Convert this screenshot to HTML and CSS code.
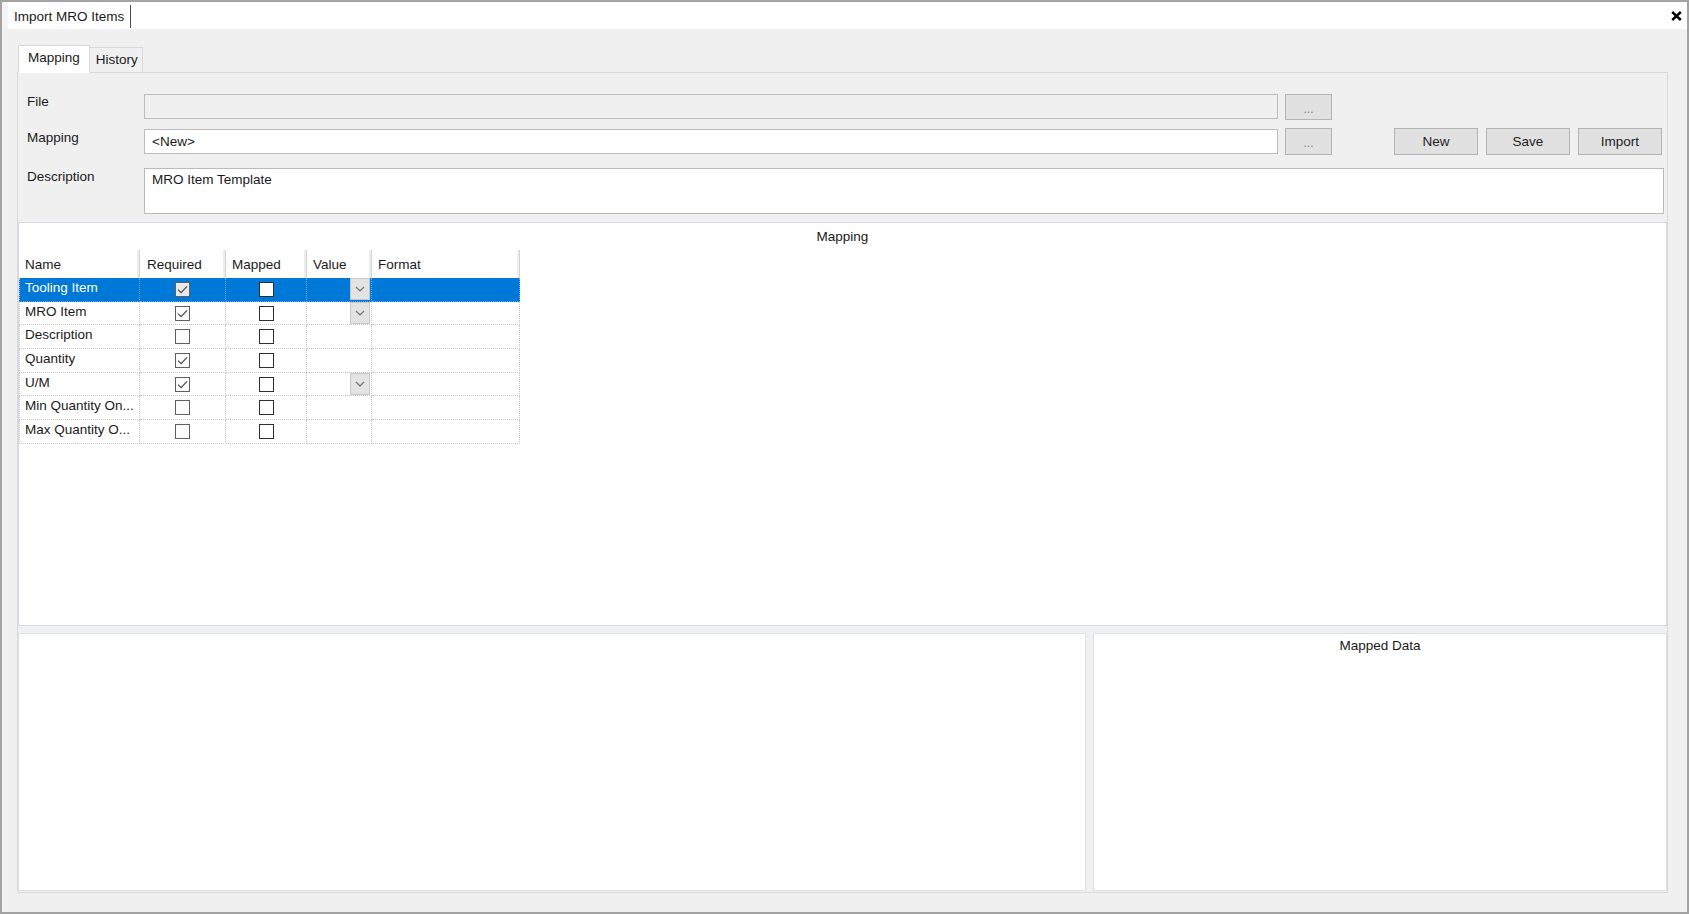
FILE: index.html
```html
<!DOCTYPE html>
<html lang="en">
<head>
<meta charset="utf-8">
<title>Import MRO Items</title>
<link rel="stylesheet" href="styles.css">
</head>
<body>
<div class="window">
  <div class="doc-strip">
    <div class="doc-tab">Import MRO Items</div>
    <div class="close">
      <svg width="11" height="10" viewBox="0 0 11 10"><path d="M1.2 1 L9.8 9 M9.8 1 L1.2 9" stroke="#000" stroke-width="2.4" fill="none"/></svg>
    </div>
  </div>
  <div class="content">
    <div class="tabs">
      <div class="tab active">Mapping</div>
      <div class="tab">History</div>
    </div>
    <div class="tab-page">
      <div class="form">
        <div class="lbl">File</div>
        <div class="input disabled"></div>
        <div class="btn dots">...</div>
        <div></div>

        <div class="lbl lbl-2">Mapping</div>
        <div class="input second">&lt;New&gt;</div>
        <div class="btn dots tall">...</div>
        <div class="actions">
          <div class="btn action">New</div>
          <div class="btn action">Save</div>
          <div class="btn action">Import</div>
        </div>

        <div class="lbl lbl-3">Description</div>
        <div class="textarea">MRO Item Template</div>
      </div>

      <div class="group">
        <div class="group-title">Mapping</div>
        <div class="grid">
          <div class="row head">
            <div class="cell c-name">Name</div>
            <div class="cell c-req">Required</div>
            <div class="cell c-map">Mapped</div>
            <div class="cell c-val">Value</div>
            <div class="cell c-fmt">Format</div>
          </div>

          <div class="row sel">
            <div class="cell c-name">Tooling Item</div>
            <div class="cell c-req center"><span class="cb req"><svg width="13" height="13" viewBox="0 0 13 13"><path d="M2 6.6 L5.1 9.6 L11 3.4" stroke="#4d4d4d" stroke-width="1.3" fill="none"/></svg></span></div>
            <div class="cell c-map center"><span class="cb"></span></div>
            <div class="cell c-val dd-cell"><span class="dd"><svg width="10" height="6" viewBox="0 0 10 6"><path d="M1 1 L5 5 L9 1" stroke="#707070" stroke-width="1.1" fill="none"/></svg></span></div>
            <div class="cell c-fmt"></div>
          </div>

          <div class="row">
            <div class="cell c-name">MRO Item</div>
            <div class="cell c-req center"><span class="cb req"><svg width="13" height="13" viewBox="0 0 13 13"><path d="M2 6.6 L5.1 9.6 L11 3.4" stroke="#4d4d4d" stroke-width="1.3" fill="none"/></svg></span></div>
            <div class="cell c-map center"><span class="cb"></span></div>
            <div class="cell c-val dd-cell"><span class="dd"><svg width="10" height="6" viewBox="0 0 10 6"><path d="M1 1 L5 5 L9 1" stroke="#707070" stroke-width="1.1" fill="none"/></svg></span></div>
            <div class="cell c-fmt"></div>
          </div>

          <div class="row">
            <div class="cell c-name">Description</div>
            <div class="cell c-req center"><span class="cb req"></span></div>
            <div class="cell c-map center"><span class="cb"></span></div>
            <div class="cell c-val"></div>
            <div class="cell c-fmt"></div>
          </div>

          <div class="row">
            <div class="cell c-name">Quantity</div>
            <div class="cell c-req center"><span class="cb req"><svg width="13" height="13" viewBox="0 0 13 13"><path d="M2 6.6 L5.1 9.6 L11 3.4" stroke="#4d4d4d" stroke-width="1.3" fill="none"/></svg></span></div>
            <div class="cell c-map center"><span class="cb"></span></div>
            <div class="cell c-val"></div>
            <div class="cell c-fmt"></div>
          </div>

          <div class="row">
            <div class="cell c-name">U/M</div>
            <div class="cell c-req center"><span class="cb req"><svg width="13" height="13" viewBox="0 0 13 13"><path d="M2 6.6 L5.1 9.6 L11 3.4" stroke="#4d4d4d" stroke-width="1.3" fill="none"/></svg></span></div>
            <div class="cell c-map center"><span class="cb"></span></div>
            <div class="cell c-val dd-cell"><span class="dd"><svg width="10" height="6" viewBox="0 0 10 6"><path d="M1 1 L5 5 L9 1" stroke="#707070" stroke-width="1.1" fill="none"/></svg></span></div>
            <div class="cell c-fmt"></div>
          </div>

          <div class="row">
            <div class="cell c-name">Min Quantity On...</div>
            <div class="cell c-req center"><span class="cb req"></span></div>
            <div class="cell c-map center"><span class="cb"></span></div>
            <div class="cell c-val"></div>
            <div class="cell c-fmt"></div>
          </div>

          <div class="row">
            <div class="cell c-name">Max Quantity O...</div>
            <div class="cell c-req center"><span class="cb req"></span></div>
            <div class="cell c-map center"><span class="cb"></span></div>
            <div class="cell c-val"></div>
            <div class="cell c-fmt"></div>
          </div>
        </div>
      </div>

      <div class="bottom">
        <div class="pane left-pane"></div>
        <div class="pane right-pane"><div class="pane-title">Mapped Data</div></div>
      </div>
    </div>
  </div>
</div>
</body>
</html>
```

FILE: styles.css
```css
* { box-sizing: border-box; }

html, body {
  margin: 0;
  padding: 0;
}

body {
  width: 1689px;
  height: 914px;
  overflow: hidden;
  font-family: "Liberation Sans", Arial, sans-serif;
  font-size: 13.5px;
  color: #1a1a1a;
  background: #f0f0f0;
}

.window {
  width: 1689px;
  height: 914px;
  border: 2px solid #a3a3a3;
  display: flex;
  flex-direction: column;
}

/* document strip */
.doc-strip {
  height: 27px;
  background: #fff;
  display: flex;
  align-items: flex-start;
  border-left: 6px solid #f4f4f4;
}

.doc-tab {
  margin-top: 3px;
  height: 23px;
  padding: 0 6px 0 6px;
  display: flex;
  align-items: center;
  border-right: 1px solid #4a4a4a;
  line-height: 16px;
  background: #fff;
}

.close {
  margin-left: auto;
  margin-right: 5px;
  margin-top: 9px;
  display: flex;
}

/* main content */
.content {
  flex: 1;
  background: #f0f0f0;
  padding: 16px 19px 19px 15px;
  display: flex;
  flex-direction: column;
}

.tabs {
  height: 28px;
  margin-bottom: -1px;
  padding-left: 1px;
  display: flex;
  align-items: flex-end;
  position: relative;
  z-index: 1;
}

.tab {
  height: 26px;
  padding: 4px 4px 0 6px;
  line-height: 16px;
  background: #f0f0f0;
  border: 1px solid #d9d9d9;
  border-left: none;
}

.tab.active {
  height: 28px;
  padding: 4px 9px 0 9px;
  background: #fff;
  border: 1px solid #d9d9d9;
  border-bottom-color: #fff;
}

.tab-page {
  flex: 1;
  border: 1px solid #d9d9d9;
  display: flex;
  flex-direction: column;
  padding-bottom: 1px;
}

/* form */
.form {
  display: grid;
  grid-template-columns: 117px 1fr 47px 332px;
  grid-template-rows: 34px 40px 46px;
  padding: 21px 3px 8px 9px;
  align-items: start;
}

.lbl {
  line-height: 16px;
  padding-top: 0;
  color: #1a1a1a;
}

.lbl-2 { padding-top: 2px; }
.lbl-3 { padding-top: 1px; }

.input {
  height: 25px;
  margin-right: 7px;
  border: 1px solid #bcbcbc;
  background: #fff;
  padding: 0 7px;
  line-height: 23px;
}

.input.disabled {
  background: #f0f0f0;
}

.input.second {
  margin-top: 1px;
}

.textarea {
  grid-column: 2 / 5;
  height: 46px;
  border: 1px solid #bababa;
  background: #fff;
  padding: 2px 7px;
  line-height: 18px;
}

.btn {
  height: 26px;
  border: 1px solid #b4b4b4;
  background: #e1e1e1;
  display: flex;
  align-items: center;
  justify-content: center;
  color: #1e1e1e;
}

.btn.dots {
  color: #7d7d7d;
  font-size: 12px;
  padding-top: 3px;
}

.btn.tall {
  height: 27px;
}

.actions {
  display: flex;
  justify-content: flex-end;
  gap: 8px;
  padding-right: 2px;
}

.btn.action {
  width: 84px;
  height: 27px;
}

/* group */
.group {
  flex: 1;
  background: #fff;
  border: 1px solid #d5dbe2;
  display: flex;
  flex-direction: column;
  align-items: flex-start;
}

.group-title {
  align-self: stretch;
  text-align: center;
  height: 27px;
  padding-top: 6px;
  line-height: 16px;
}

/* grid */
.grid {
  width: 501px;
  display: flex;
  flex-direction: column;
}

.row {
  display: flex;
  height: 23.7px;
}

.row.head {
  height: 28px;
}

.cell {
  height: 100%;
  border-right: 1px dotted #c6c6c6;
  border-bottom: 1px dotted #c6c6c6;
  line-height: 20px;
  padding-left: 5px;
  white-space: nowrap;
  overflow: hidden;
}

.row .c-name {
  border-left: 1px dotted #c6c6c6;
}

.row.head .cell {
  border: none;
  border-right: 1px solid #d3d3d3;
  box-shadow: inset -2px 0 0 #ededed;
  line-height: 29px;
  padding-left: 6px;
  color: #1a1a1a;
}

.row.head .c-name {
  border-left: none;
}

.c-name { width: 121px; }
.c-req { width: 86px; }
.c-map { width: 81px; }
.c-val { width: 65px; }
.c-fmt { width: 148px; }

.row.head .c-req { padding-left: 7px; }

.center {
  display: flex;
  align-items: center;
  justify-content: center;
  padding-left: 0;
}

.row.sel {
  background: #0078d7;
  color: #fff;
}

.row.sel .cell {
  border-bottom-color: #6aa9e0;
  border-right-color: #6aa9e0;
}

.cb {
  width: 15px;
  height: 15px;
  border: 1px solid #2e2e2e;
  background: #fff;
  display: flex;
  align-items: center;
  justify-content: center;
}

.cb.req {
  border-color: #5e5e5e;
  background: #fbfbfb;
}

.row.sel .cb.req {
  background: #e9e9e9;
}

.dd-cell {
  display: flex;
  justify-content: flex-end;
  align-items: center;
  padding: 0 1px 0 0;
}

.dd {
  width: 20px;
  height: 22px;
  background: #e3e3e3;
  border: 1px solid #c8c8c8;
  display: flex;
  align-items: center;
  justify-content: center;
}

/* bottom panes */
.bottom {
  height: 258px;
  margin-top: 7px;
  display: flex;
  gap: 7px;
}

.pane {
  background: #fff;
  border: 1px solid #dbe0e6;
}

.left-pane {
  width: 1068px;
}

.right-pane {
  flex: 1;
}

.pane-title {
  text-align: center;
  padding-top: 4px;
  line-height: 16px;
}
```
